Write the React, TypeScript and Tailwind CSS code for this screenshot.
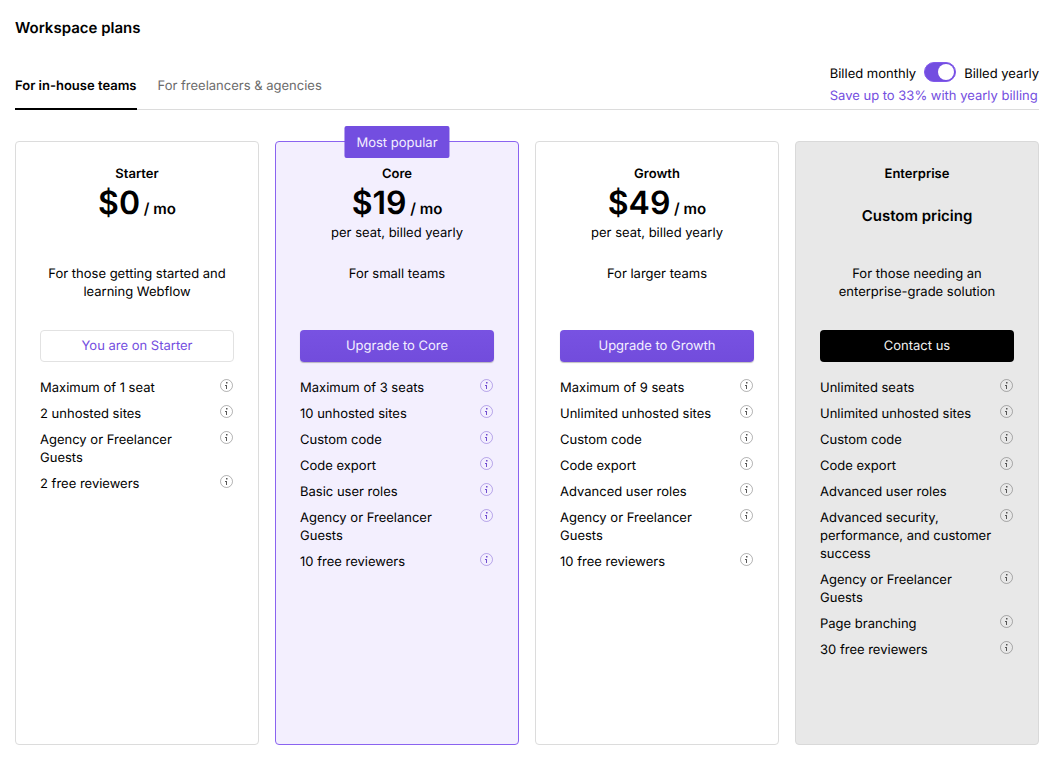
import { useState } from "react";
import clsx from "clsx";

type Plan = {
  name: string;
  price?: string;
  note?: string;
  description: string;
  action: string;
  tone: "plain" | "popular" | "enterprise";
  button: "outline" | "primary" | "dark";
  features: string[];
};

const plans: Plan[] = [
  {
    name: "Starter",
    price: "$0",
    description: "For those getting started and learning Webflow",
    action: "You are on Starter",
    tone: "plain",
    button: "outline",
    features: ["Maximum of 1 seat", "2 unhosted sites", "Agency or Freelancer Guests", "2 free reviewers"],
  },
  {
    name: "Core",
    price: "$19",
    note: "per seat, billed yearly",
    description: "For small teams",
    action: "Upgrade to Core",
    tone: "popular",
    button: "primary",
    features: [
      "Maximum of 3 seats",
      "10 unhosted sites",
      "Custom code",
      "Code export",
      "Basic user roles",
      "Agency or Freelancer Guests",
      "10 free reviewers",
    ],
  },
  {
    name: "Growth",
    price: "$49",
    note: "per seat, billed yearly",
    description: "For larger teams",
    action: "Upgrade to Growth",
    tone: "plain",
    button: "primary",
    features: [
      "Maximum of 9 seats",
      "Unlimited unhosted sites",
      "Custom code",
      "Code export",
      "Advanced user roles",
      "Agency or Freelancer Guests",
      "10 free reviewers",
    ],
  },
  {
    name: "Enterprise",
    description: "For those needing an enterprise-grade solution",
    action: "Contact us",
    tone: "enterprise",
    button: "dark",
    features: [
      "Unlimited seats",
      "Unlimited unhosted sites",
      "Custom code",
      "Code export",
      "Advanced user roles",
      "Advanced security, performance, and customer success",
      "Agency or Freelancer Guests",
      "Page branching",
      "30 free reviewers",
    ],
  },
];

const cardTone = {
  plain: "border-[#dcdcdc] bg-white",
  popular: "border-[#8a63f0] bg-[#f3effe]",
  enterprise: "border-[#d9d9d9] bg-[#e8e8e8]",
};

const iconTone = {
  plain: "text-[#3c3c3c]",
  popular: "text-[#5a32c8]",
  enterprise: "text-[#3c3c3c]",
};

const buttonTone = {
  outline: "border border-[#e2e2e2] bg-white text-[#734ee0]",
  primary: "bg-linear-to-b from-[#7852e2] to-[#724cdc] text-[#f4f0ff] shadow-[0_1px_1px_rgba(0,0,0,0.25)]",
  dark: "bg-black text-[#f2f2f2]",
};

function InfoIcon() {
  return (
    <svg viewBox="0 0 16 16" className="size-4" aria-hidden="true">
      <circle cx="8.5" cy="7.5" r="6" fill="none" stroke="currentColor" strokeOpacity="0.38" />
      <path d="M8 4h1.5v1.5H8zM7 7h2v4H8V8H7z" fill="currentColor" fillOpacity="0.85" />
    </svg>
  );
}

function PlanCard({ plan }: { plan: Plan }) {
  return (
    <section className={clsx("relative flex flex-col rounded border px-6 pt-[23px] pb-[85px]", cardTone[plan.tone])}>
      {plan.tone === "popular" && (
        <span className="absolute -top-4 left-1/2 -translate-x-1/2 rounded-xs bg-[#734ee0] px-3 pt-2 pb-1.5 leading-[18px] whitespace-nowrap text-[#f4f0ff]">
          Most popular
        </span>
      )}
      <div className="h-[91px] text-center">
        <h2 className="font-semibold">{plan.name}</h2>
        {plan.price ? (
          <p className="h-[41px] text-[15px] leading-10 font-semibold">
            <span className="text-[32px]">{plan.price}</span> / mo
          </p>
        ) : (
          <p className="pt-[21px] text-[15px] leading-6 font-semibold">Custom pricing</p>
        )}
        {plan.note && <p>{plan.note}</p>}
      </div>
      <p className="mt-[9px] h-9 text-center">{plan.description}</p>
      <button
        type="button"
        className={clsx(
          "mt-[29px] flex h-8 items-center justify-center rounded [text-rendering:inherit]",
          buttonTone[plan.button],
        )}
      >
        {plan.action}
      </button>
      <ul className="mt-[17px] flex flex-col gap-2">
        {plan.features.map((feature) => (
          <li key={feature} className="flex items-start justify-between gap-1">
            <span>{feature}</span>
            <button
              type="button"
              aria-label={"About " + feature}
              className={clsx("-mt-px shrink-0", iconTone[plan.tone])}
            >
              <InfoIcon />
            </button>
          </li>
        ))}
      </ul>
    </section>
  );
}

export default function App() {
  const [yearly, setYearly] = useState(true);

  return (
    <main className="bg-white px-[15px] pt-4 pb-5 font-['Inter',sans-serif] text-[13px] leading-[18px] text-black [text-rendering:geometricPrecision]">
      <h1 className="text-[15px] leading-6 font-semibold">Workspace plans</h1>
      <header className="mt-[22px] flex items-end justify-between border-b border-[#dcdcdc]">
        <nav className="-mb-px flex gap-[21px]">
          <a href="#teams" aria-current="page" className="border-b-2 border-black pb-[13px] font-semibold">
            For in-house teams
          </a>
          <a href="#agencies" className="border-b-2 border-transparent pb-[13px] text-[#6b6b6b]">
            For freelancers &amp; agencies
          </a>
        </nav>
        <div className="pb-1">
          <label className="flex items-end gap-2">
            <span>Billed monthly</span>
            <input
              type="checkbox"
              role="switch"
              checked={yearly}
              onChange={(event) => setYearly(event.target.checked)}
              className="mb-px h-5 w-8 appearance-none rounded-full border border-[#8259ec] bg-[#734ee0] before:block before:size-4 before:translate-x-px before:translate-y-px before:rounded-full before:bg-white checked:before:translate-x-[13px]"
            />
            <span>Billed yearly</span>
          </label>
          <p className="mt-1 text-[#734ee0]">Save up to 33% with yearly billing</p>
        </div>
      </header>
      <div className="mt-[31px] grid grid-cols-4 gap-4">
        {plans.map((plan) => (
          <PlanCard key={plan.name} plan={plan} />
        ))}
      </div>
    </main>
  );
}
